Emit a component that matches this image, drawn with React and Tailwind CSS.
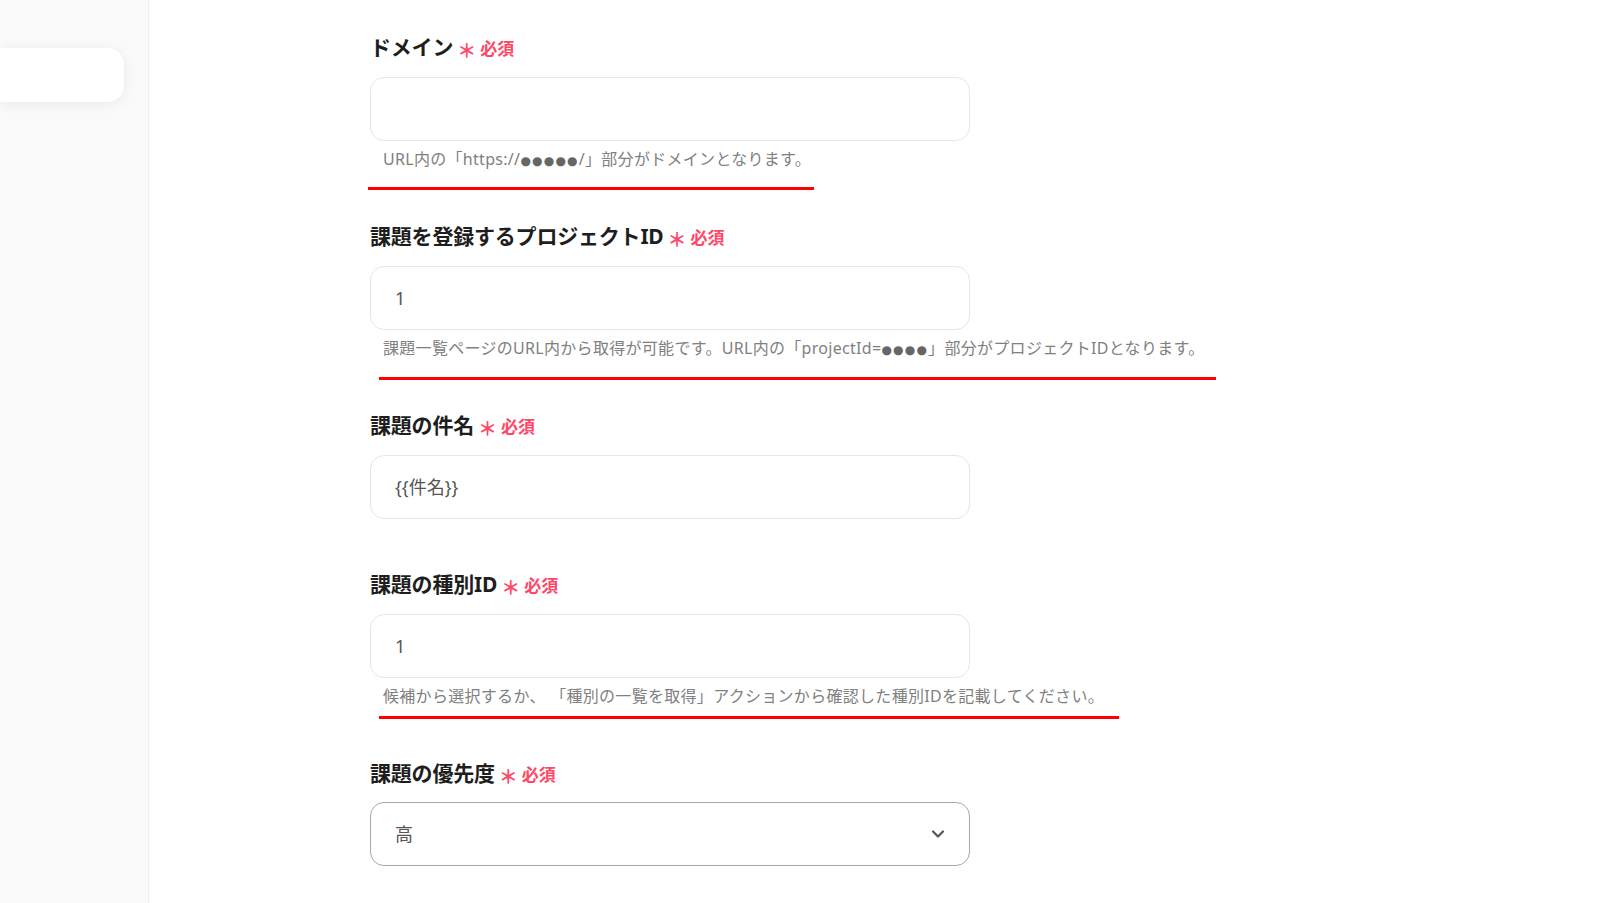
import React from 'react';
import { ChevronDown } from 'lucide-react';

const Dots = ({ n }) => (
  <span
    className="text-[12px] leading-none tracking-[1.2px] text-[#666] align-middle"
    style={{ fontFamily: '"DejaVu Sans", sans-serif' }}
  >
    {'●'.repeat(n)}
  </span>
);

const fields = [
  {
    label: 'ドメイン',
    value: '',
    help: <>URL内の「https://<Dots n={5} />/」部分がドメインとなります。</>,
    mark: { left: -2, top: 16, width: 446 },
  },
  {
    label: '課題を登録するプロジェクトID',
    value: '1',
    help: <>課題一覧ページのURL内から取得が可能です。URL内の「projectId=<Dots n={4} />」部分がプロジェクトIDとなります。</>,
    mark: { left: 9, top: 17, width: 837 },
  },
  { label: '課題の件名', value: '{{件名}}' },
  {
    label: '課題の種別ID',
    value: '1',
    help: '候補から選択するか、 「種別の一覧を取得」アクションから確認した種別IDを記載してください。',
    mark: { left: 9, top: 8, width: 740 },
  },
];

function Label({ text }) {
  return (
    <div className="flex items-center h-7">
      <span className="text-[21px] font-bold text-[#1e1e1e] tracking-[-0.2px]">{text}</span>
      <span className="ml-[4px] mt-[6px] text-[19px] font-bold leading-none text-[#ff4767]">＊</span>
      <span className="ml-[4px] mt-[2px] text-[17px] font-bold text-[#ff4767]">必須</span>
    </div>
  );
}

function Field({ f }) {
  return (
    <div className="mb-[52px]">
      <Label text={f.label} />
      <div className="mt-[15px] h-[64px] w-[600px] rounded-[14px] border border-[#e4e6ea] bg-white flex items-center pl-6 text-[18px] text-[#555]">
        {f.value}
      </div>
      {f.help && (
        <div className="relative mt-[6px] h-6">
          <p className="h-6 pl-[13px] text-[16px] leading-6 tracking-[0.3px] text-[#808080] whitespace-nowrap">{f.help}</p>
          {/* red annotation stroke */}
          <div
            className="absolute top-full h-[3px] bg-[#ff0000]"
            style={{ left: f.mark.left, marginTop: f.mark.top, width: f.mark.width }}
          />
        </div>
      )}
    </div>
  );
}

export default function App() {
  return (
    <div
      className="flex h-[903px] overflow-hidden bg-white [text-spacing-trim:space-all]"
      style={{ fontFamily: '"Noto Sans", "Noto Sans CJK JP", sans-serif' }}
    >
      <aside className="w-[149px] shrink-0 bg-[#fafafa] border-r border-[#efefef] pt-12">
        <div className="h-[54px] w-[124px] rounded-r-2xl bg-white shadow-[0_2px_14px_rgba(0,0,0,0.07)]" />
      </aside>

      <main className="pl-[221px] pt-[34px]">
        {fields.map((f, i) => (
          <Field key={i} f={f} />
        ))}

        <div>
          <Label text="課題の優先度" />
          <div className="mt-[14px] h-[64px] w-[600px] rounded-[14px] border border-[#a8a8a8] bg-white flex items-center justify-between pl-6 pr-[21px] text-[18px] text-[#555]">
            <span>高</span>
            <ChevronDown size={20} strokeWidth={2.6} className="text-[#555]" />
          </div>
        </div>
      </main>
    </div>
  );
}
